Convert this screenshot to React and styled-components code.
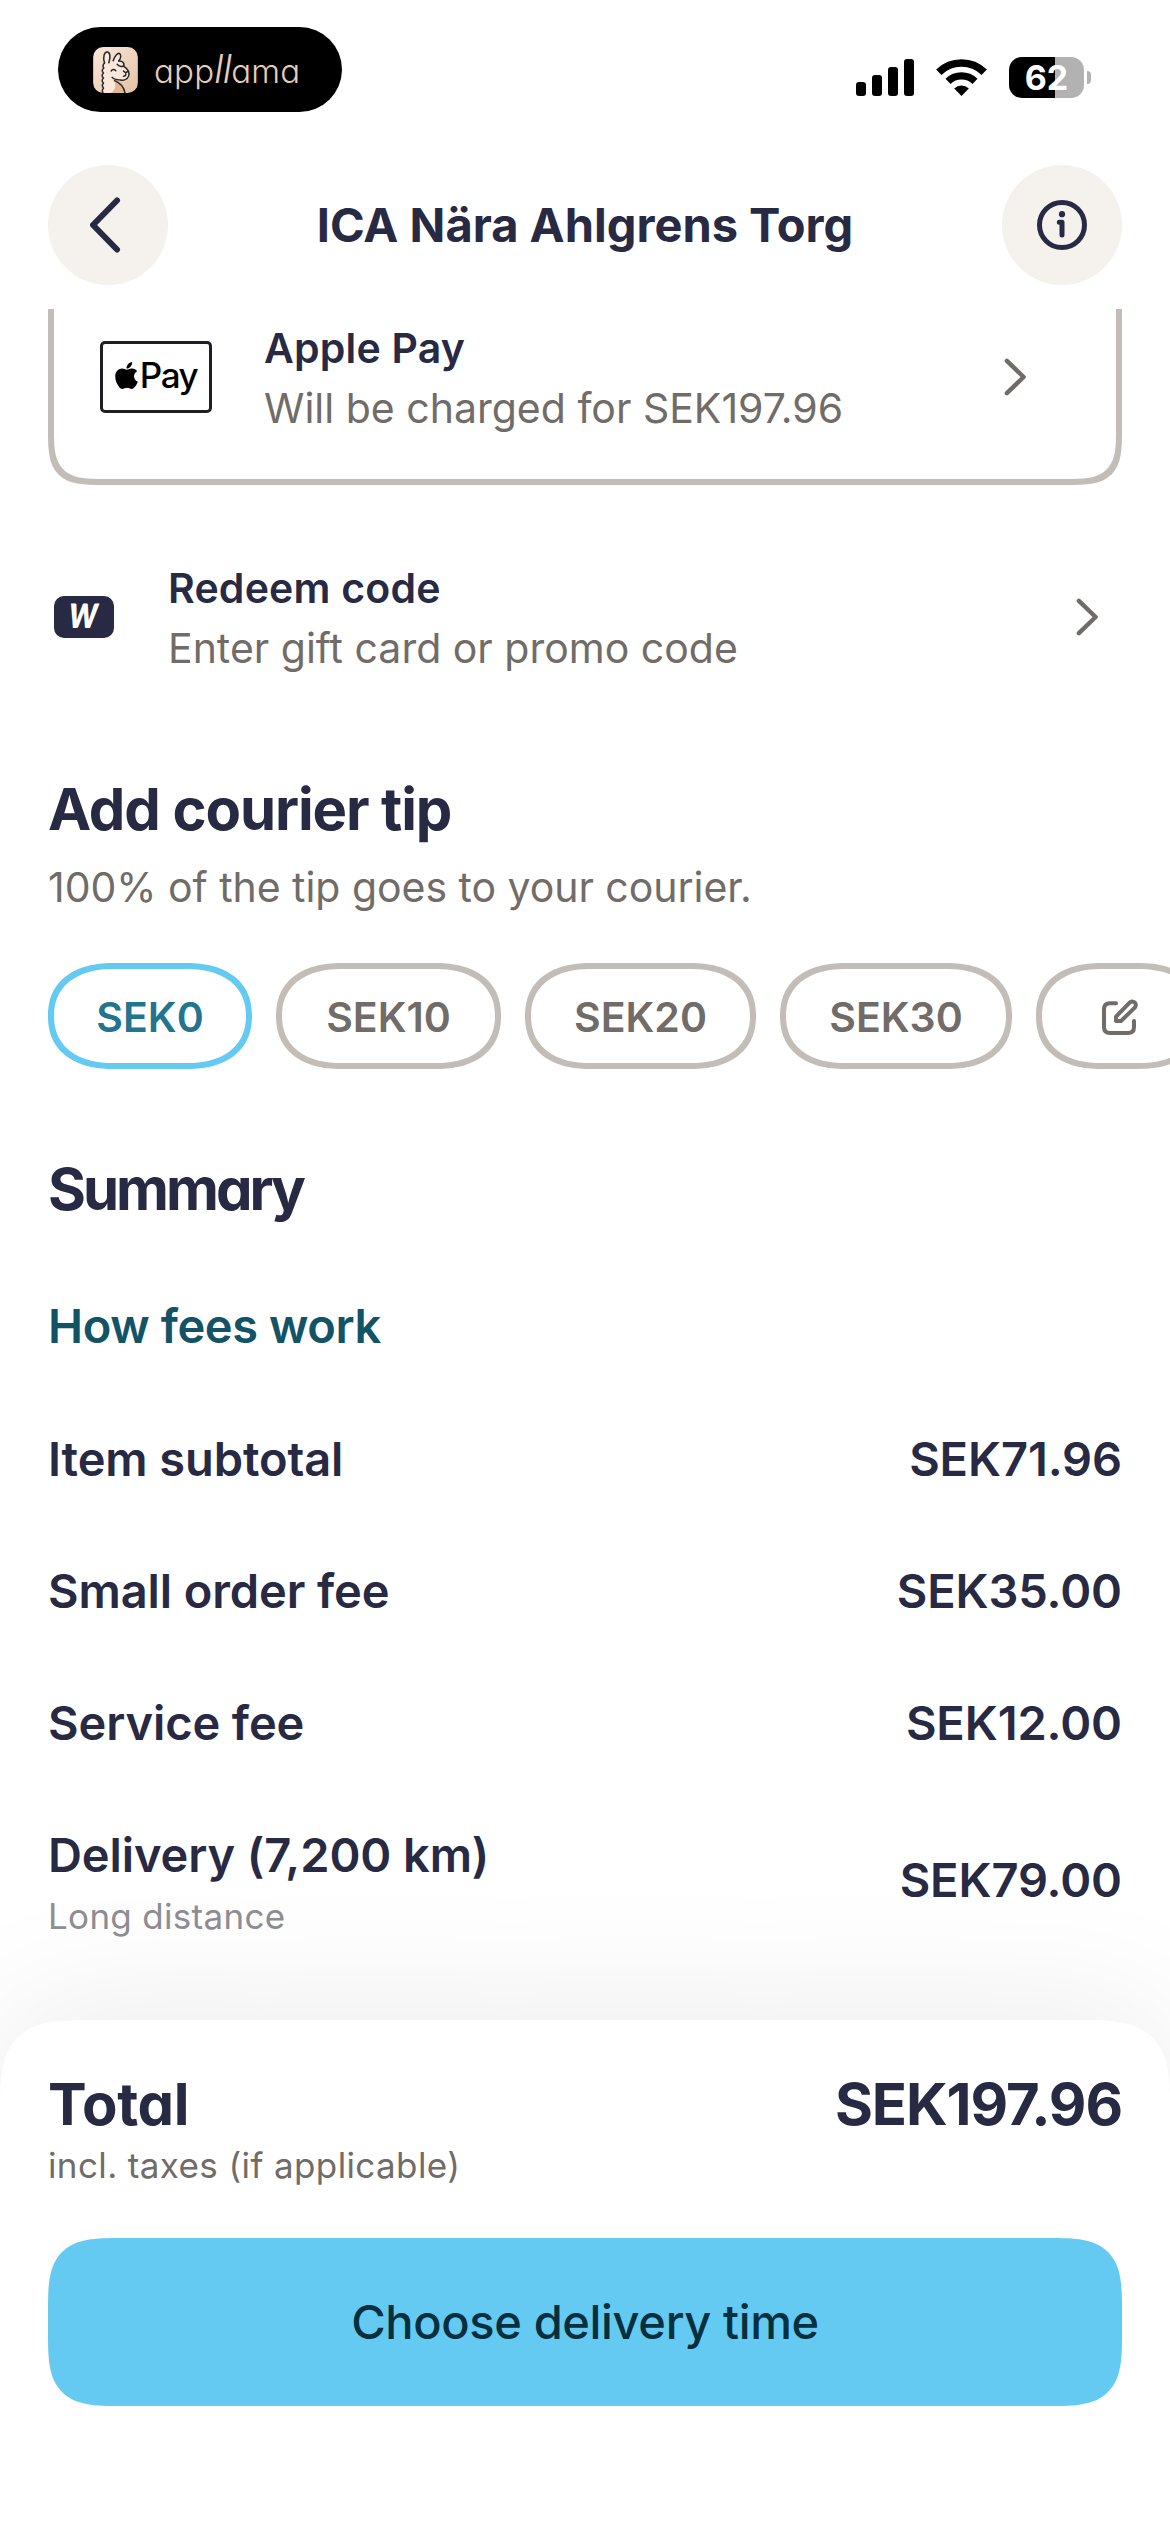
import styled, { createGlobalStyle, css } from 'styled-components'
import { useState } from 'react'
import { FaApple } from 'react-icons/fa'

const colors = {
     ink: '#272a42',
     grey: '#716c68',
     border: '#c3bdb8',
     sand: '#f5f1ec',
     primary: '#65caf1',
     primaryText: '#23748f',
     link: '#125466',
}

// continuous corners, plain radius where corner-shape is missing
const smoothCorner = (top, bottom) => css`
     border-radius: ${top}px ${top}px ${bottom}px ${bottom}px;
     @supports (corner-shape: superellipse(1.7)) {
          border-radius: ${top * 1.52}px ${top * 1.52}px ${bottom * 1.52}px ${bottom * 1.52}px;
          corner-shape: superellipse(1.7);
     }
`

const GlobalStyle = createGlobalStyle`
     * {
          box-sizing: border-box;
     }
     body {
          margin: 0;
          background: #fff;
          color: ${colors.ink};
          font-family: Inter, 'Liberation Sans', sans-serif;
     }
     h1, h2, p {
          margin: 0;
     }
     button {
          font-family: inherit;
          background: transparent;
          border: none;
          padding: 0;
     }
     svg {
          display: block;
          flex: none;
     }
`
const Page = styled.div`
     width: 1170px;
     height: 2532px;
     display: flex;
     flex-direction: column;
     overflow: hidden;
     background: #fff;
`
const StatusBar = styled.div`
     height: 139px;
     padding: 0 79px 0 58px;
     display: flex;
     align-items: center;
     justify-content: space-between;
`
const BrandPill = styled.div`
     width: 284px;
     height: 85px;
     padding-left: 35px;
     border-radius: 43px;
     background: #000;
     display: flex;
     align-items: center;
     gap: 16px;
`
const BrandName = styled.span`
     color: #e5cdbb;
     font-size: 33px;
     font-weight: 350;
     line-height: 40px;
     letter-spacing: 0.2px;
     font-feature-settings: 'cv11';

     & i {
          font-size: 39px;
          letter-spacing: -0.6px;
     }
`
const StatusIcons = styled.div`
     margin-top: 16px;
     display: flex;
     align-items: center;
     gap: 22px;
`
const BatteryWrapper = styled.div`
     display: flex;
     align-items: center;
     gap: 3px;
`
const Battery = styled.div`
     width: 75px;
     height: 41px;
     border-radius: 13px;
     background: linear-gradient(to right, #000 ${({ $level }) => $level}%, #b2b2b2 ${({ $level }) => $level}%);
     color: #fff;
     font-size: 34px;
     font-weight: 700;
     line-height: 42px;
     text-align: center;
`
const BatteryCap = styled.div`
     width: 4px;
     height: 13px;
     border-radius: 0 4px 4px 0;
     background: #b2b2b2;
`
const Header = styled.header`
     padding: 26px 48px 24px;
     display: flex;
     align-items: center;
     justify-content: space-between;
`
const RoundButton = styled.button`
     width: 120px;
     height: 120px;
     border-radius: 50%;
     background: ${colors.sand};
     display: flex;
     align-items: center;
     justify-content: center;
`
const StoreName = styled.h1`
     font-size: 47px;
     font-weight: 700;
     line-height: 60px;
`
const Content = styled.main`
     flex: 1;
     min-height: 0;
     overflow: hidden;
`
const PaymentCard = styled.div`
     height: 176px;
     margin: 0 48px;
     padding: 7px 90px 0 46px;
     border: 6px solid ${colors.border};
     border-top: none;
     ${smoothCorner(0, 36)}
     display: flex;
     align-items: flex-start;
     gap: 52px;
`
const RedeemRow = styled.div`
     margin-top: 71px;
     padding: 0 72px 0 54px;
     display: flex;
     gap: 54px;
`
const IconSlot = styled.div`
     height: 122px;
     display: flex;
     align-items: center;
`
const RowText = styled.div`
     flex: 1;
     padding-top: 2px;
`
const RowTitle = styled.p`
     font-size: 41px;
     font-weight: 600;
     line-height: 60px;
     letter-spacing: 0.2px;
`
const Muted = styled.p`
     color: ${colors.grey};
     font-size: 41px;
     line-height: 60px;
`
const ApplePayBadge = styled.div`
     width: 112px;
     height: 72px;
     padding-bottom: 4px;
     border: 3px solid #1e1e24;
     border-radius: 5px;
     color: #000;
     font-size: 35px;
     font-weight: 500;
     line-height: 60px;
     letter-spacing: -1.5px;
     display: flex;
     align-items: center;
     justify-content: center;
     gap: 2px;

     & svg {
          width: 23px;
          height: 31px;
     }
`
const CodeBadge = styled.div`
     width: 60px;
     height: 42px;
     border-radius: 10px;
     background: ${colors.ink};
     color: #fff;
     font-family: Lato, sans-serif;
     font-size: 45px;
     font-style: italic;
     font-weight: 900;
     line-height: 29px;
     text-align: center;

     & span {
          display: block;
          transform: scale(0.86, 1.06) skewX(-4deg);
     }
`
const Heading = styled.h2`
     font-size: 58px;
     font-weight: 650;
     line-height: 72px;
     letter-spacing: ${({ $spacing }) => $spacing}px;
     font-feature-settings: 'cv11';
`
const Section = styled.section`
     padding: 0 48px;
     margin-top: ${({ $top }) => $top}px;
`
const TipNote = styled(Muted)`
     margin-top: 12px;
     letter-spacing: -0.04px;
`
const Tips = styled.div`
     margin-top: 46px;
     margin-right: -48px;
     display: flex;
     gap: 24px;
     overflow: hidden;
`
const Tip = styled.button`
     flex: none;
     width: ${({ $width }) => $width}px;
     height: 106px;
     padding-top: 1px;
     border: 6px solid ${({ $active }) => ($active ? colors.primary : colors.border)};
     border-radius: 53px;
     color: ${({ $active }) => ($active ? colors.primaryText : colors.grey)};
     font-size: 41px;
     font-weight: 600;
     line-height: 60px;
     display: flex;
     align-items: center;
     justify-content: center;

     @supports (corner-shape: superellipse(1.2)) {
          border-radius: 66px / 53px;
          corner-shape: superellipse(1.2);
     }
`
const FeesLink = styled.p`
     margin-top: 71px;
     color: ${colors.link};
     font-size: 47px;
     font-weight: 600;
     line-height: 60px;
     letter-spacing: -0.4px;
`
const FeeList = styled.div`
     margin-top: 73px;
     display: flex;
     flex-direction: column;
     gap: 72px;
`
const FeeRow = styled.div`
     display: flex;
     align-items: center;
     justify-content: space-between;
     font-size: 47px;
     font-weight: 600;
     line-height: 60px;
     letter-spacing: -0.1px;
`
const FeeNote = styled.p`
     margin-top: 12px;
     color: #8e8e93;
     font-size: 35px;
     font-weight: 400;
     line-height: 38px;
     letter-spacing: 0.3px;
`
const Sheet = styled.footer`
     position: relative;
     height: 512px;
     padding: 48px 48px 0;
     ${smoothCorner(60, 0)}
     background: #fff;
     box-shadow: 0 0 150px rgba(0, 0, 0, 0.09);
`
const TotalRow = styled.div`
     display: flex;
     justify-content: space-between;
`
const TaxNote = styled.p`
     color: ${colors.grey};
     font-size: 35px;
     line-height: 50px;
     letter-spacing: 0.38px;
`
const SubmitButton = styled.button`
     width: 100%;
     height: 168px;
     margin-top: 48px;
     padding-bottom: 2px;
     ${smoothCorner(48, 48)}
     background: ${colors.primary};
     color: #06303f;
     font-size: 47px;
     font-weight: 500;
     letter-spacing: -0.35px;
`

const tips = [
     { label: 'SEK0', width: 204 },
     { label: 'SEK10', width: 225 },
     { label: 'SEK20', width: 231 },
     { label: 'SEK30', width: 232 },
]

const fees = [
     { label: 'Item subtotal', amount: 'SEK71.96' },
     { label: 'Small order fee', amount: 'SEK35.00' },
     { label: 'Service fee', amount: 'SEK12.00' },
     { label: 'Delivery (7,200 km)', amount: 'SEK79.00', note: 'Long distance' },
]

function LlamaIcon() {
     return (
          <svg width="45" height="46" viewBox="0 0 134 138" fill="none">
               <defs>
                    <linearGradient id="llamaBg" x1="0" y1="0" x2="1" y2="1">
                         <stop offset="0" stopColor="#fbe9dc" />
                         <stop offset="1" stopColor="#e3c1a3" />
                    </linearGradient>
               </defs>
               <rect width="134" height="138" rx="30" fill="url(#llamaBg)" />
               <path
                    d="M34 48 Q26 56 32 63 Q23 70 31 78 Q23 85 31 93 Q23 100 31 108 Q24 116 31 123 L28 137 L95 137 Q94 118 72 104 Q64 98 60 92 L84 100 Q106 98 107 82 Q104 68 90 60 Q97 50 82 43 Q84 22 76 20 Q66 24 60 42 L48 46 Q52 18 42 15 Q30 16 34 48Z"
                    fill="#fbe8da"
               />
               <path d="M60 94 Q88 98 100 138 L52 138 Q76 124 60 94Z" fill="#e2b893" />
               <g stroke="#25292e" strokeWidth="4.5" strokeLinecap="round" strokeLinejoin="round">
                    <path d="M34 48 C28 30 34 13 43 15 C53 18 51 34 47 47" />
                    <path d="M60 41 C66 26 74 16 80 20 C85 26 81 36 77 42" />
                    <path d="M77 42 C86 40 96 49 91 57 C84 60 76 57 72 52" />
                    <path d="M92 58 C103 65 110 76 106 88 C102 98 91 101 82 99 C73 98 62 98 57 91" />
                    <path d="M34 48 Q26 56 32 63 Q23 70 31 78 Q23 85 31 93 Q23 100 31 108 Q24 116 31 123 Q25 130 29 137" />
                    <path d="M64 101 Q91 112 95 137" />
                    <path d="M54 72 Q60 63 68 71" />
                    <path d="M91 72 Q98 80 104 73 M98 79 Q99 88 91 88" />
               </g>
          </svg>
     )
}

function SignalIcon() {
     return (
          <svg width="58" height="37" viewBox="0 0 58 37">
               <rect y="23" width="10" height="14" rx="3" />
               <rect x="16" y="16" width="10" height="21" rx="3" />
               <rect x="32" y="8" width="10" height="29" rx="3" />
               <rect x="48" width="10" height="37" rx="3" />
          </svg>
     )
}

function WifiIcon() {
     return (
          <svg width="51" height="37" viewBox="0 0 51 37" fill="none" stroke="#000">
               <path d="M2.8 13.2 A32.5 32.5 0 0 1 48.2 13.2" strokeWidth="7.6" />
               <path d="M12 22.3 A19.5 19.5 0 0 1 39 22.3" strokeWidth="7.2" />
               <path d="M25.5 37 L18.2 29.5 A10.5 10.5 0 0 1 32.8 29.5 Z" fill="#000" stroke="none" />
          </svg>
     )
}

function Chevron() {
     return (
          <svg width="22" height="38" viewBox="0 0 22 38" fill="none">
               <path
                    d="M2.9 2.8 L19.6 19 L2.9 35.2"
                    stroke={colors.grey}
                    strokeWidth="4.4"
                    strokeLinecap="round"
                    strokeLinejoin="round"
               />
          </svg>
     )
}

function BackIcon() {
     return (
          <svg width="36" height="62" viewBox="0 0 36 62" fill="none">
               <path
                    d="M27 6.5 L3 31 L27 55.5"
                    stroke={colors.ink}
                    strokeWidth="6"
                    strokeLinecap="round"
                    strokeLinejoin="round"
               />
          </svg>
     )
}

function InfoIcon() {
     return (
          <svg width="50" height="50" viewBox="0 0 50 50" fill="none" stroke={colors.ink}>
               <circle cx="25" cy="25" r="22.5" strokeWidth="5" />
               <circle cx="25" cy="14.2" r="3.1" fill={colors.ink} stroke="none" />
               <path d="M22.3 22.3 H25 V35" strokeWidth="5" strokeLinecap="round" strokeLinejoin="round" />
          </svg>
     )
}

function EditIcon() {
     return (
          <svg width="36" height="36" viewBox="0 0 36 36" fill="none" stroke={colors.grey} strokeWidth="4">
               <path
                    d="M14 4.2 H8 Q2 4.2 2 10.2 V28 Q2 34 8 34 H26 Q32 34 32 28 V22"
                    strokeLinecap="round"
                    strokeLinejoin="round"
               />
               <path
                    d="M14 22 V17.6 L27.6 3.6 A3.4 3.4 0 0 1 32.8 8.6 L19 22 Z"
                    strokeLinejoin="round"
               />
          </svg>
     )
}

function App() {
     const [tip, setTip] = useState('SEK0')
     return (
          <Page>
               <GlobalStyle />
               <StatusBar>
                    <BrandPill>
                         <LlamaIcon />
                         <BrandName>
                              app<i>ll</i>ama
                         </BrandName>
                    </BrandPill>
                    <StatusIcons>
                         <SignalIcon />
                         <WifiIcon />
                         <BatteryWrapper>
                              <Battery $level={62}>62</Battery>
                              <BatteryCap />
                         </BatteryWrapper>
                    </StatusIcons>
               </StatusBar>
               <Header>
                    <RoundButton aria-label="Back">
                         <BackIcon />
                    </RoundButton>
                    <StoreName>ICA Nära Ahlgrens Torg</StoreName>
                    <RoundButton aria-label="Info">
                         <InfoIcon />
                    </RoundButton>
               </Header>
               <Content>
                    <PaymentCard>
                         <IconSlot>
                              <ApplePayBadge>
                                   <FaApple />
                                   Pay
                              </ApplePayBadge>
                         </IconSlot>
                         <RowText>
                              <RowTitle>Apple Pay</RowTitle>
                              <Muted>Will be charged for SEK197.96</Muted>
                         </RowText>
                         <IconSlot>
                              <Chevron />
                         </IconSlot>
                    </PaymentCard>
                    <RedeemRow>
                         <IconSlot>
                              <CodeBadge>
                                   <span>w</span>
                              </CodeBadge>
                         </IconSlot>
                         <RowText>
                              <RowTitle>Redeem code</RowTitle>
                              <Muted>Enter gift card or promo code</Muted>
                         </RowText>
                         <IconSlot>
                              <Chevron />
                         </IconSlot>
                    </RedeemRow>
                    <Section $top={95}>
                         <Heading $spacing={-1.1}>Add courier tip</Heading>
                         <TipNote>100% of the tip goes to your courier.</TipNote>
                         <Tips>
                              {tips.map(({ label, width }) => (
                                   <Tip
                                        key={label}
                                        $width={width}
                                        $active={tip === label}
                                        onClick={() => setTip(label)}
                                   >
                                        {label}
                                   </Tip>
                              ))}
                              <Tip $width={168} aria-label="Edit">
                                   <EditIcon />
                              </Tip>
                         </Tips>
                    </Section>
                    <Section $top={84}>
                         <Heading $spacing={-3}>Summary</Heading>
                         <FeesLink>How fees work</FeesLink>
                         <FeeList>
                              {fees.map(({ label, amount, note }) => (
                                   <FeeRow key={label}>
                                        <div>
                                             {label}
                                             {note && <FeeNote>{note}</FeeNote>}
                                        </div>
                                        <span>{amount}</span>
                                   </FeeRow>
                              ))}
                         </FeeList>
                    </Section>
               </Content>
               <Sheet>
                    <TotalRow>
                         <Heading as="p" $spacing={-0.3}>
                              Total
                         </Heading>
                         <Heading as="p" $spacing={-1.1}>
                              SEK197.96
                         </Heading>
                    </TotalRow>
                    <TaxNote>incl. taxes (if applicable)</TaxNote>
                    <SubmitButton>Choose delivery time</SubmitButton>
               </Sheet>
          </Page>
     )
}
export default App
